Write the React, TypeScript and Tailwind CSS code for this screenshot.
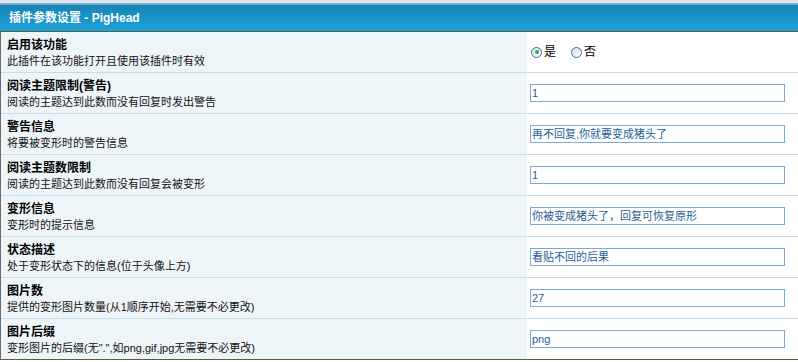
import React from "react";

const rows: { title: string; desc: string; value?: string; radio?: boolean }[] = [
  { title: "启用该功能", desc: "此插件在该功能打开且使用该插件时有效", radio: true },
  { title: "阅读主题限制(警告)", desc: "阅读的主题达到此数而没有回复时发出警告", value: "1" },
  { title: "警告信息", desc: "将要被变形时的警告信息", value: "再不回复,你就要变成猪头了" },
  { title: "阅读主题数限制", desc: "阅读的主题达到此数而没有回复会被变形", value: "1" },
  { title: "变形信息", desc: "变形时的提示信息", value: "你被变成猪头了，回复可恢复原形" },
  { title: "状态描述", desc: "处于变形状态下的信息(位于头像上方)", value: "看贴不回的后果" },
  { title: "图片数", desc: "提供的变形图片数量(从1顺序开始,无需要不必更改)", value: "27" },
  { title: "图片后缀", desc: "变形图片的后缀(无\".\",如png,gif,jpg无需要不必更改)", value: "png" },
];

function Radio({ checked }: { checked: boolean }) {
  return (
    <span className="relative inline-flex h-[11px] w-[11px] items-center justify-center rounded-full border border-[#3a6ea8] bg-gradient-to-br from-[#d4dce4] to-white">
      {checked && <span className="h-[4px] w-[4px] rounded-full bg-[#2db52d]" />}
    </span>
  );
}

export default function App() {
  return (
    <div
      className="w-[798px] h-[362px] overflow-hidden bg-white text-[12px]"
      style={{ fontFamily: '"Liberation Sans", "Noto Sans CJK SC", sans-serif' }}
    >
      <div className="h-[3px] bg-[#dfe5e8]" />
      <div className="h-[2px] bg-[#6fb0d2]" />
      <div className="flex h-[27px] items-center border-b border-[#5f5b33] bg-gradient-to-b from-[#1884b5] to-[#1ca2da] pl-[9px] font-bold text-white">
        插件参数设置 - PigHead
      </div>
      <div className="border-l border-[#6b6b6b]">
        {rows.map((r, i) => (
          <div
            key={i}
            className={`flex h-[41px] border-b ${i === rows.length - 1 ? "border-[#5f5b33]" : "border-[#c5dcec]"}`}
          >
            <div className="flex w-[526px] flex-col justify-center bg-[#eef5f9] pl-[6px] pt-[3px] text-black">
              <div className="font-bold leading-[16px]">{r.title}</div>
              <div className="text-[11px] leading-[17px] text-[#111]">{r.desc}</div>
            </div>
            <div className="flex flex-1 items-center pl-[3px]">
              {r.radio ? (
                <div className="flex items-center pl-[1px]">
                  <Radio checked />
                  <span className="ml-[2px] mr-[15px]">是</span>
                  <Radio checked={false} />
                  <span className="ml-[2px]">否</span>
                </div>
              ) : (
                <div className="flex h-[18px] w-[255px] items-center border border-[#7aa8d8] bg-white pl-[1px] text-[11px] text-[#1e5e95]">
                  {r.value}
                </div>
              )}
            </div>
          </div>
        ))}
      </div>
    </div>
  );
}
